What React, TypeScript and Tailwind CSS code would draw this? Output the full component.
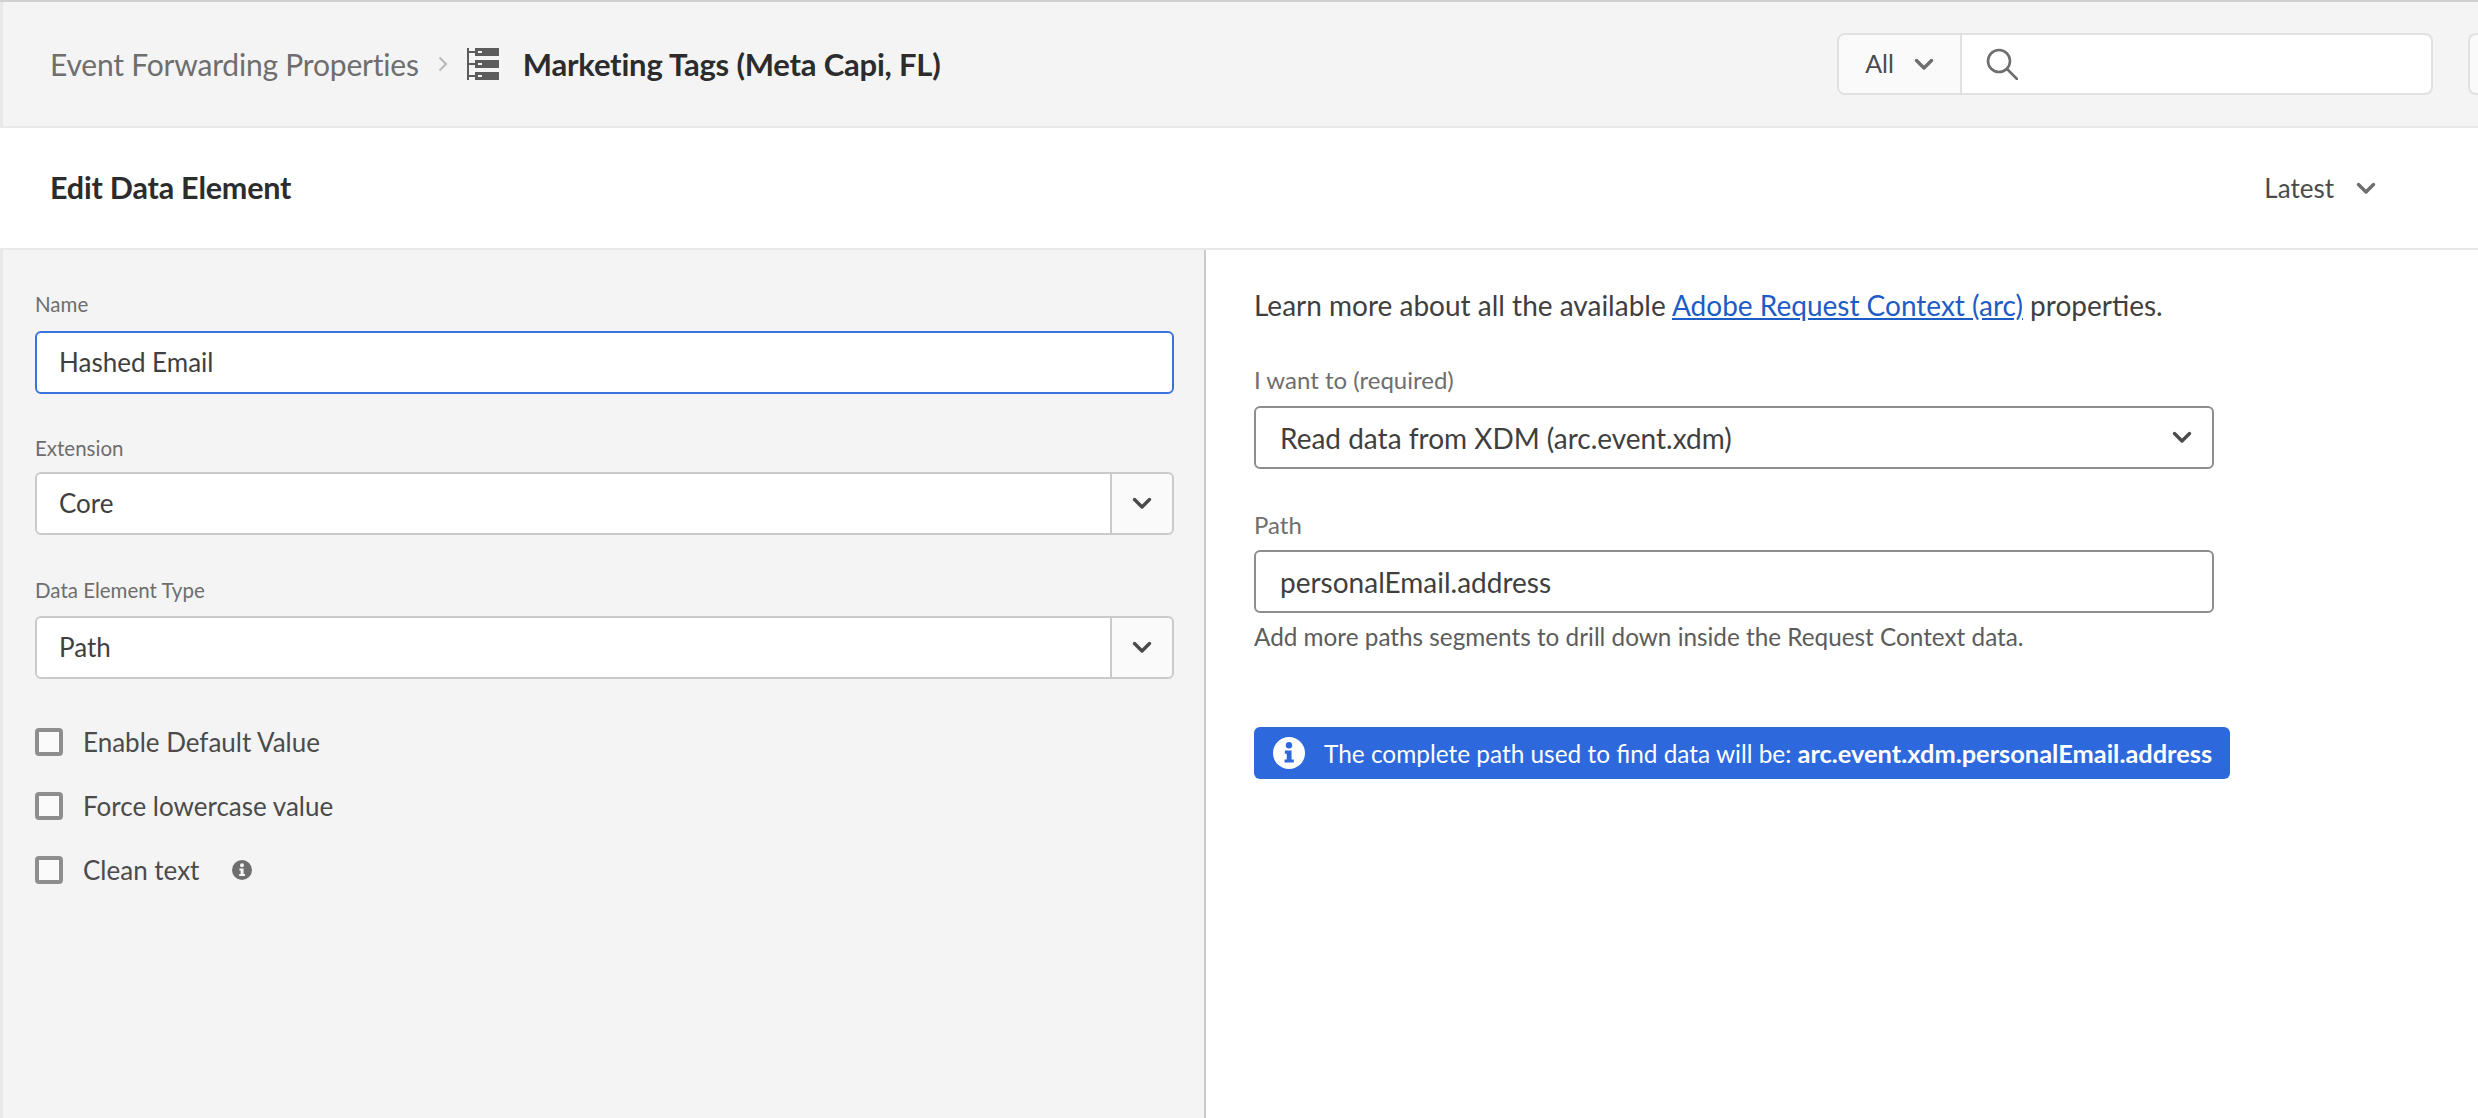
import React from "react";

function Chevron({ className = "" }: { className?: string }) {
  return (
    <svg viewBox="0 0 20 13" className={className} fill="none" stroke="currentColor" strokeWidth="3.4" strokeLinecap="round" strokeLinejoin="round">
      <path d="M2.5 2.5 L10 10 L17.5 2.5" />
    </svg>
  );
}

function InfoDot({ className = "", fg }: { className?: string; fg: string }) {
  return (
    <svg viewBox="0 0 20 20" className={className}>
      <circle cx="10" cy="10" r="10" fill="currentColor" />
      <circle cx="10" cy="5.2" r="2" fill={fg} />
      <path d="M7.4 8.4 H11.6 V14 H13 V16 H7.2 V14 H8.6 V10.4 H7.4 Z" fill={fg} />
    </svg>
  );
}

function PropertyIcon() {
  return (
    <svg viewBox="0 0 32 32" className="h-8 w-8 text-[#5c5c5c] shrink-0" fill="currentColor">
      <rect x="0" y="0" width="2" height="32" />
      <rect x="2" y="3" width="6" height="2" />
      <rect x="2" y="15" width="6" height="2" />
      <rect x="2" y="27" width="6" height="2" />
      <path fillRule="evenodd" d="M8 0H32V8H8Z M11 3V5H15V3Z" />
      <path fillRule="evenodd" d="M8 12H32V20H8Z M11 15V17H15V15Z" />
      <path fillRule="evenodd" d="M8 24H32V32H8Z M11 27V29H15V27Z" />
    </svg>
  );
}

function Label({ children, className = "" }: { children: React.ReactNode; className?: string }) {
  return <div className={`leading-[26px] text-[#6e6e6e] ${className}`}>{children}</div>;
}

function ComboBox({ value, className = "" }: { value: string; className?: string }) {
  return (
    <div className={`flex h-[63px] rounded-[6px] border-2 border-[#cacaca] bg-white ${className}`}>
      <div className="flex-1 flex items-center pl-[22px] text-[26px] text-[#3f3f3f]">{value}</div>
      <div className="w-[62px] flex items-center justify-center border-l-2 border-[#cacaca] bg-[#fafafa] rounded-r-[5px]">
        <Chevron className="w-[20px] h-[13px] text-[#4b4b4b]" />
      </div>
    </div>
  );
}

function Check({ label, extra, className = "" }: { label: string; extra?: React.ReactNode; className?: string }) {
  return (
    <div className={`flex items-center h-[28px] ${className}`}>
      <div className="w-[28px] h-[28px] rounded-[4px] border-[4px] border-[#8e8e8e] bg-[#fafafa] shrink-0" />
      <span className="ml-[20px] text-[26px] text-[#4b4b4b]">{label}</span>
      {extra}
    </div>
  );
}

export default function App() {
  return (
    <div
      className="h-screen w-full overflow-hidden flex flex-col bg-white border-t-2 border-[#d0d0d0]"
      style={{ fontFamily: '"Lato", "Noto Sans", sans-serif' }}
    >
      <header className="h-[124px] shrink-0 flex items-center bg-[#f4f4f4] border-l-[3px] border-[#e8e8e8] pl-[47px]">
        <span className="text-[30px] text-[#6e6e6e] tracking-[-0.2px]">Event Forwarding Properties</span>
        <svg viewBox="0 0 10 16" className="w-[10px] h-[16px] ml-[19px] mr-[19px] text-[#b8b8b8]" fill="none" stroke="currentColor" strokeWidth="2">
          <path d="M1.5 1.5 L8 8 L1.5 14.5" />
        </svg>
        <PropertyIcon />
        <span className="ml-[24px] text-[31px] font-bold text-[#2c2c2c] tracking-[-0.2px]">Marketing Tags (Meta Capi, FL)</span>
        <div className="ml-auto flex items-center">
          <div className="flex h-[62px] w-[596px] rounded-[8px] border-2 border-[#e1e1e1] bg-white">
            <div className="w-[123px] flex items-center justify-center gap-[20px] bg-[#fafafa] rounded-l-[7px] border-r-2 border-[#e1e1e1]">
              <span className="text-[25px] text-[#4b4b4b]">All</span>
              <Chevron className="w-[20px] h-[13px] text-[#6e6e6e]" />
            </div>
            <div className="flex items-center pl-[24px]">
              <svg viewBox="0 0 32 32" className="w-[32px] h-[32px] text-[#6e6e6e]" fill="none" stroke="currentColor" strokeWidth="2.6" strokeLinecap="round">
                <circle cx="13" cy="13" r="11" />
                <path d="M21 21 L31 31" />
              </svg>
            </div>
          </div>
          <div className="ml-[35px] h-[62px] w-[10px] rounded-l-[8px] border-2 border-r-0 border-[#e1e1e1] bg-[#fafafa]" />
        </div>
      </header>

      <div className="h-[124px] shrink-0 flex items-center border-t-2 border-b-2 border-[#e8e8e8] pl-[50px] pr-[102px] bg-white">
        <h1 className="text-[30.5px] font-bold text-[#2c2c2c] tracking-[-0.2px]">Edit Data Element</h1>
        <div className="ml-auto flex items-center gap-[22px]">
          <span className="text-[26px] text-[#4b4b4b]">Latest</span>
          <Chevron className="w-[20px] h-[13px] text-[#6e6e6e]" />
        </div>
      </div>

      <div className="flex-1 flex min-h-0">
        <aside className="w-[1206px] shrink-0 bg-[#f4f4f4] border-l-[3px] border-r-2 border-l-[#e8e8e8] border-r-[#cacaca] pl-[32px] pr-[30px] pt-[41px]">
          <Label className="text-[20.5px]">Name</Label>
          <div className="mt-[14px] h-[63px] rounded-[6px] border-2 border-[#3a73db] bg-white flex items-center pl-[22px] text-[26px] text-[#3f3f3f]">
            Hashed Email
          </div>
          <Label className="mt-[41px] text-[20.5px]">Extension</Label>
          <ComboBox value="Core" className="mt-[11px]" />
          <Label className="mt-[42px] text-[20.5px]">Data Element Type</Label>
          <ComboBox value="Path" className="mt-[13px]" />
          <Check label="Enable Default Value" className="mt-[49px]" />
          <Check label="Force lowercase value" className="mt-[36px]" />
          <Check
            label="Clean text"
            className="mt-[36px]"
            extra={<InfoDot fg="#f4f4f4" className="w-[20px] h-[20px] ml-[33px] text-[#6e6e6e]" />}
          />
        </aside>

        <main className="flex-1 pl-[48px] pt-[39px]">
          <p className="text-[28px] leading-[32px] text-[#3f3f3f]">
            Learn more about all the available{" "}
            <a className="text-[#1d5cc4] underline underline-offset-2">Adobe Request Context (arc)</a> properties.
          </p>
          <Label className="mt-[46px] text-[24px]">I want to (required)</Label>
          <div className="mt-[13px] w-[960px] h-[63px] rounded-[6px] border-2 border-[#8e8e8e] bg-white flex items-center justify-between pl-[24px] pr-[20px] text-[28px] text-[#3f3f3f]">
            <span>Read data from XDM (arc.event.xdm)</span>
            <Chevron className="w-[20px] h-[13px] text-[#4b4b4b]" />
          </div>
          <Label className="mt-[43px] text-[24px]">Path</Label>
          <div className="mt-[12px] w-[960px] h-[63px] rounded-[6px] border-2 border-[#8e8e8e] bg-white flex items-center pl-[24px] text-[28px] text-[#3f3f3f]">
            personalEmail.address
          </div>
          <div className="mt-[11px] text-[24.3px] leading-[26px] text-[#5c5c5c]">
            Add more paths segments to drill down inside the Request Context data.
          </div>
          <div className="mt-[77px] w-[976px] h-[52px] rounded-[6px] bg-[#2d68dc] flex items-center pl-[19px] text-[24.4px] text-white">
            <InfoDot fg="#2d68dc" className="w-[32px] h-[32px] text-white shrink-0" />
            <span className="ml-[19px] whitespace-nowrap">
              The complete path used to find data will be: <b className="text-[25.4px]">arc.event.xdm.personalEmail.address</b>
            </span>
          </div>
        </main>
      </div>
    </div>
  );
}
